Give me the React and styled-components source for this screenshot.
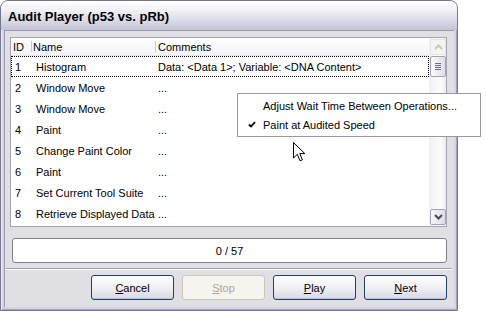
import React from 'react';
import styled, { createGlobalStyle } from 'styled-components';

const Global = createGlobalStyle`
  html, body { margin: 0; padding: 0; background: #ffffff; }
  body { font-family: "Liberation Sans", Arial, sans-serif; font-size: 11px; color: #000; }
  * { box-sizing: border-box; }
`;

const Stage = styled.div`
  position: relative;
  width: 486px;
  height: 312px;
  overflow: hidden;
`;

const Window = styled.div`
  width: 458px;
  height: 311px;
  display: flex;
  flex-direction: column;
  border: 1px solid #76768f;
  border-radius: 8px 8px 0 0;
  background: #d4d4e2;
  overflow: hidden;
`;

const TitleBar = styled.div`
  height: 29px;
  flex: none;
  display: flex;
  align-items: center;
  padding: 1px 0 0 7px;
  background: linear-gradient(to bottom, #ffffff 0%, #f2f2f7 30%, #dcdce8 65%, #c3c3d6 100%);
  font-family: "Liberation Sans", Arial, sans-serif;
  font-weight: bold;
  font-size: 13px;
  color: #000;
`;

const Frame = styled.div`
  flex: 1;
  display: flex;
  padding: 0 3px 3px 3px;
  background: #d4d4e2;
  box-shadow: inset 1px 0 0 #eeeef4, inset -1px 0 0 #a6a6ba, inset 0 -1px 0 #a6a6ba;
`;

const Client = styled.div`
  flex: 1;
  display: flex;
  flex-direction: column;
  background: #e0dfe3;
  border-top: 1px solid #9c9cae;
  border-left: 1px solid #9c9cae;
  padding: 6px 7px 0 5px;
`;

const ListBox = styled.div`
  height: 190px;
  display: flex;
  border: 1px solid #a5a5b3;
  background: #ffffff;
`;

const Table = styled.div`
  flex: 1;
  display: flex;
  flex-direction: column;
`;

const cols = '20px 124px 1fr';

const HeaderRow = styled.div`
  display: grid;
  grid-template-columns: ${cols};
  height: 18px;
  align-items: center;
  background: linear-gradient(to bottom, #ffffff, #f3f3f7);
  border-bottom: 1px solid #e6e6ec;
`;

const HeaderCell = styled.div`
  position: relative;
  height: 100%;
  display: flex;
  align-items: center;
  padding-left: ${p => p.$pad}px;
  white-space: nowrap;
  ${p => p.$divider && `
    &::before {
      content: '';
      position: absolute;
      left: 0;
      top: 3px;
      bottom: 3px;
      width: 1px;
      background: #c7c7d1;
    }
  `}
`;

const Row = styled.div`
  display: grid;
  grid-template-columns: ${cols};
  height: 21px;
  align-items: center;
  border: 1px dotted ${p => (p.$focus ? '#000' : 'transparent')};
`;

const Cell = styled.div`
  padding-left: ${p => p.$pad}px;
  white-space: nowrap;
  overflow: hidden;
`;

const ScrollBar = styled.div`
  width: 17px;
  display: flex;
  flex-direction: column;
  padding: 1px 0 1px 1px;
  background: linear-gradient(to right, #f1f1f5, #fcfcfd 70%, #ececf1);
`;

const ArrowBtn = styled.div`
  width: 16px;
  height: 16px;
  display: flex;
  align-items: center;
  justify-content: center;
  border-radius: 2px;
  border: 1px solid ${p => (p.$disabled ? '#e6e5df' : '#a3a3b8')};
  background: ${p => (p.$disabled ? '#f4f4f0' : 'linear-gradient(to right, #f8f8fb, #dcdce6)')};
`;

const Thumb = styled.div`
  margin-top: 1px;
  width: 16px;
  height: 21px;
  display: flex;
  flex-direction: column;
  align-items: center;
  justify-content: center;
  gap: 1px;
  border: 1px solid #a3a3b8;
  border-radius: 2px;
  background: linear-gradient(to right, #fbfbfd, #dedee8);
`;

const Grip = styled.span`
  width: 6px;
  height: 1px;
  background: #6e6e80;
`;

const Spacer = styled.div`flex: 1;`;

const Progress = styled.div`
  margin: 11px 0 0 2px;
  height: 25px;
  display: flex;
  align-items: center;
  justify-content: center;
  border: 1px solid #80808a;
  border-radius: 3px;
  background: #ffffff;
`;

const Separator = styled.div`
  margin: 5px -5px 0 -4px;
  height: 2px;
  border-top: 1px solid #a0a0a8;
  border-bottom: 1px solid #ffffff;
`;

const ButtonRow = styled.div`
  margin-top: 5px;
  display: flex;
  justify-content: flex-end;
  gap: 8px;
`;

const Button = styled.div`
  width: 83px;
  height: 25px;
  display: flex;
  align-items: center;
  justify-content: center;
  border-radius: 3px;
  border: 1px solid ${p => (p.$disabled ? '#cac8bb' : '#1f3f6d')};
  background: ${p =>
    p.$disabled ? '#f5f4ef' : 'linear-gradient(to bottom, #ffffff 0%, #f0f0f5 50%, #d8d8e4 100%)'};
  color: ${p => (p.$disabled ? '#aca899' : '#000')};
  box-shadow: ${p => (p.$disabled ? 'none' : 'inset 0 -1px 0 #c4c4d4')};
  u { text-decoration: underline; }
`;

const Menu = styled.div`
  position: absolute;
  left: 237px;
  top: 93px;
  width: 244px;
  height: 44px;
  padding: 2px 0;
  background: #ffffff;
  border: 1px solid #9a9a9e;
  display: flex;
  flex-direction: column;
`;

const MenuItem = styled.div`
  height: 19px;
  display: flex;
  align-items: center;
  padding-left: 25px;
  position: relative;
  white-space: nowrap;
`;

const Check = styled.svg`
  position: absolute;
  left: 10px;
  top: 6px;
`;

const Cursor = styled.svg`
  position: absolute;
  left: 293px;
  top: 142px;
`;

const rows = [
  ['1', 'Histogram', 'Data: <Data 1>; Variable: <DNA Content>'],
  ['2', 'Window Move', '...'],
  ['3', 'Window Move', '...'],
  ['4', 'Paint', '...'],
  ['5', 'Change Paint Color', '...'],
  ['6', 'Paint', '...'],
  ['7', 'Set Current Tool Suite', '...'],
  ['8', 'Retrieve Displayed Data', '...'],
];

export default function App() {
  return (
    <Stage>
      <Global />
      <Window>
        <TitleBar>Audit Player (p53 vs. pRb)</TitleBar>
        <Frame>
          <Client>
            <ListBox>
              <Table>
                <HeaderRow>
                  <HeaderCell $pad={2}>ID</HeaderCell>
                  <HeaderCell $pad={2} $divider>Name</HeaderCell>
                  <HeaderCell $pad={3} $divider>Comments</HeaderCell>
                </HeaderRow>
                {rows.map((r, i) => (
                  <Row key={r[0]} $focus={i === 0}>
                    <Cell $pad={3}>{r[0]}</Cell>
                    <Cell $pad={4}>{r[1]}</Cell>
                    <Cell $pad={2}>{r[2]}</Cell>
                  </Row>
                ))}
              </Table>
              <ScrollBar>
                <ArrowBtn $disabled>
                  <svg width="9" height="6" viewBox="0 0 9 6">
                    <polyline points="1,5 4.5,1.5 8,5" fill="none" stroke="#c9c7bc" strokeWidth="2" />
                  </svg>
                </ArrowBtn>
                <Thumb>
                  <Grip /><Grip /><Grip /><Grip />
                </Thumb>
                <Spacer />
                <ArrowBtn>
                  <svg width="9" height="6" viewBox="0 0 9 6">
                    <polyline points="1,1 4.5,4.5 8,1" fill="none" stroke="#4a4a5a" strokeWidth="2" />
                  </svg>
                </ArrowBtn>
              </ScrollBar>
            </ListBox>
            <Progress>0 / 57</Progress>
            <Separator />
            <ButtonRow>
              <Button><span><u>C</u>ancel</span></Button>
              <Button $disabled><span><u>S</u>top</span></Button>
              <Button><span><u>P</u>lay</span></Button>
              <Button><span><u>N</u>ext</span></Button>
            </ButtonRow>
          </Client>
        </Frame>
      </Window>
      <Menu>
        <MenuItem>Adjust Wait Time Between Operations...</MenuItem>
        <MenuItem>
          <Check width="8" height="7" viewBox="0 0 8 7">
            <polyline points="1,3.5 3,5.5 7,1" fill="none" stroke="#000" strokeWidth="1.8" />
          </Check>
          Paint at Audited Speed
        </MenuItem>
      </Menu>
      <Cursor width="13" height="21" viewBox="0 0 13 21">
        <path d="M0.5 0.5 L0.5 16 L4.3 12.3 L7 18.8 L9.4 17.8 L6.8 11.6 L11.8 11.6 Z" fill="#fff" stroke="#000" strokeWidth="1" strokeLinejoin="miter" />
      </Cursor>
    </Stage>
  );
}
